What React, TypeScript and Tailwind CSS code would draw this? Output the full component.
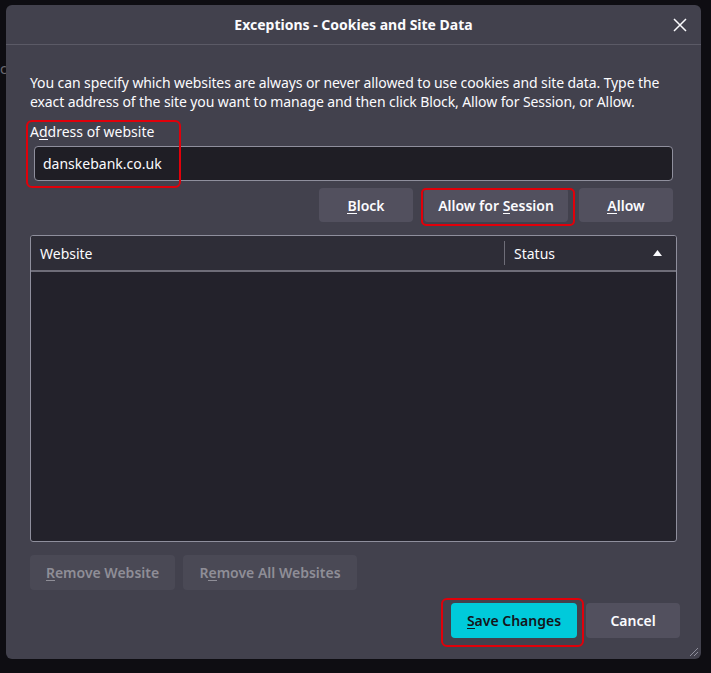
import React from "react";

const U = ({ c }: { c: string }) => <span className="inline-block border-b border-current leading-[15px]">{c}</span>;

export default function App() {
  return (
    <div className="w-[711px] h-[673px] bg-[#0e0d12] relative overflow-hidden text-[14px] text-[#fbfbfe]" style={{ fontFamily: '"Noto Sans", "Open Sans", sans-serif' }}>
      <div className="absolute left-0 top-[62px] text-[#6b6a73] leading-none">c</div>
      <div className="absolute left-[6px] top-[5px] w-[695px] h-[654px] bg-[#42414d] rounded-md flex flex-col">
        <div className="h-[40px] border-b border-[#5b5a66] flex items-center justify-center relative shrink-0">
          <span className="font-bold text-[14px]">Exceptions - Cookies and Site Data</span>
          <svg className="absolute right-[14px] top-[13px]" width="14" height="14" viewBox="0 0 14 14"><path d="M1 1L13 13M13 1L1 13" stroke="#fbfbfe" strokeWidth="1.5" /></svg>
        </div>
        <div className="px-[24px] pt-[28px] flex flex-col relative flex-1">
          <p className="leading-[19px] tracking-[-0.1px]">You can specify which websites are always or never allowed to use cookies and site data. Type the exact address of the site you want to manage and then click Block, Allow for Session, or Allow.</p>
          <div className="mt-[11px] leading-[19px]">A<U c="d" />dress of website</div>
          <div className="mt-[5px] mx-[4px] h-[35px] bg-[#1f1e25] border border-[#8f8f9d] rounded-[4px] flex items-center px-[8px]">danskebank.co.uk</div>
          <div className="mt-[7px] flex justify-end gap-[8px] pr-[4px]">
            <button className="h-[34px] w-[94px] bg-[#52505e] rounded-[4px] font-semibold"><U c="B" />lock</button>
            <button className="h-[34px] w-[144px] bg-[#52505e] rounded-[4px] font-semibold mx-[3px]">Allow for <U c="S" />ession</button>
            <button className="h-[34px] w-[94px] bg-[#52505e] rounded-[4px] font-semibold"><U c="A" />llow</button>
          </div>
          <div className="mt-[13px] w-[647px] h-[307px] border border-[#8f8f9d] rounded-[3px] bg-[#23222b] flex flex-col overflow-hidden">
            <div className="h-[36px] bg-[#2e2d37] border-b-2 border-[#6e6d78] flex shrink-0">
              <div className="w-[474px] flex items-center px-[9px] border-r border-[#6e6d78] my-[5px]">Website</div>
              <div className="flex-1 flex items-center justify-between pl-[9px] pr-[14px]">
                <span>Status</span>
                <svg width="9" height="6" viewBox="0 0 9 6"><path d="M0 6L4.5 0L9 6Z" fill="#fbfbfe" /></svg>
              </div>
            </div>
          </div>
          <div className="mt-[13px] flex gap-[8px]">
            <button className="h-[35px] w-[145px] bg-[#4a4955] rounded-[4px] font-semibold text-[#8f8e97]"><U c="R" />emove Website</button>
            <button className="h-[35px] w-[174px] bg-[#4a4955] rounded-[4px] font-semibold text-[#8f8e97]">R<U c="e" />move All Websites</button>
          </div>
          <div className="mt-[13px] flex justify-end gap-[9px] -mr-[3px]">
            <button className="h-[35px] w-[126px] bg-[#00cadb] rounded-[4px] font-semibold text-[#15141a]"><U c="S" />ave Changes</button>
            <button className="h-[35px] w-[94px] bg-[#52505e] rounded-[4px] font-semibold">Cancel</button>
          </div>
        </div>
        <svg className="absolute right-[2px] bottom-[2px]" width="12" height="12" viewBox="0 0 12 12"><path d="M11 3L3 11M11 7L7 11" stroke="#8f8f9d" strokeWidth="1" /></svg>
      </div>
      <div className="absolute left-[26px] top-[120px] w-[155px] h-[68px] border-2 border-[#e0000a] rounded-[6px]" />
      <div className="absolute left-[421px] top-[188px] w-[154px] h-[38px] border-2 border-[#e0000a] rounded-[5px]" />
      <div className="absolute left-[441px] top-[598px] w-[143px] h-[49px] border-2 border-[#e0000a] rounded-[6px]" />
    </div>
  );
}
